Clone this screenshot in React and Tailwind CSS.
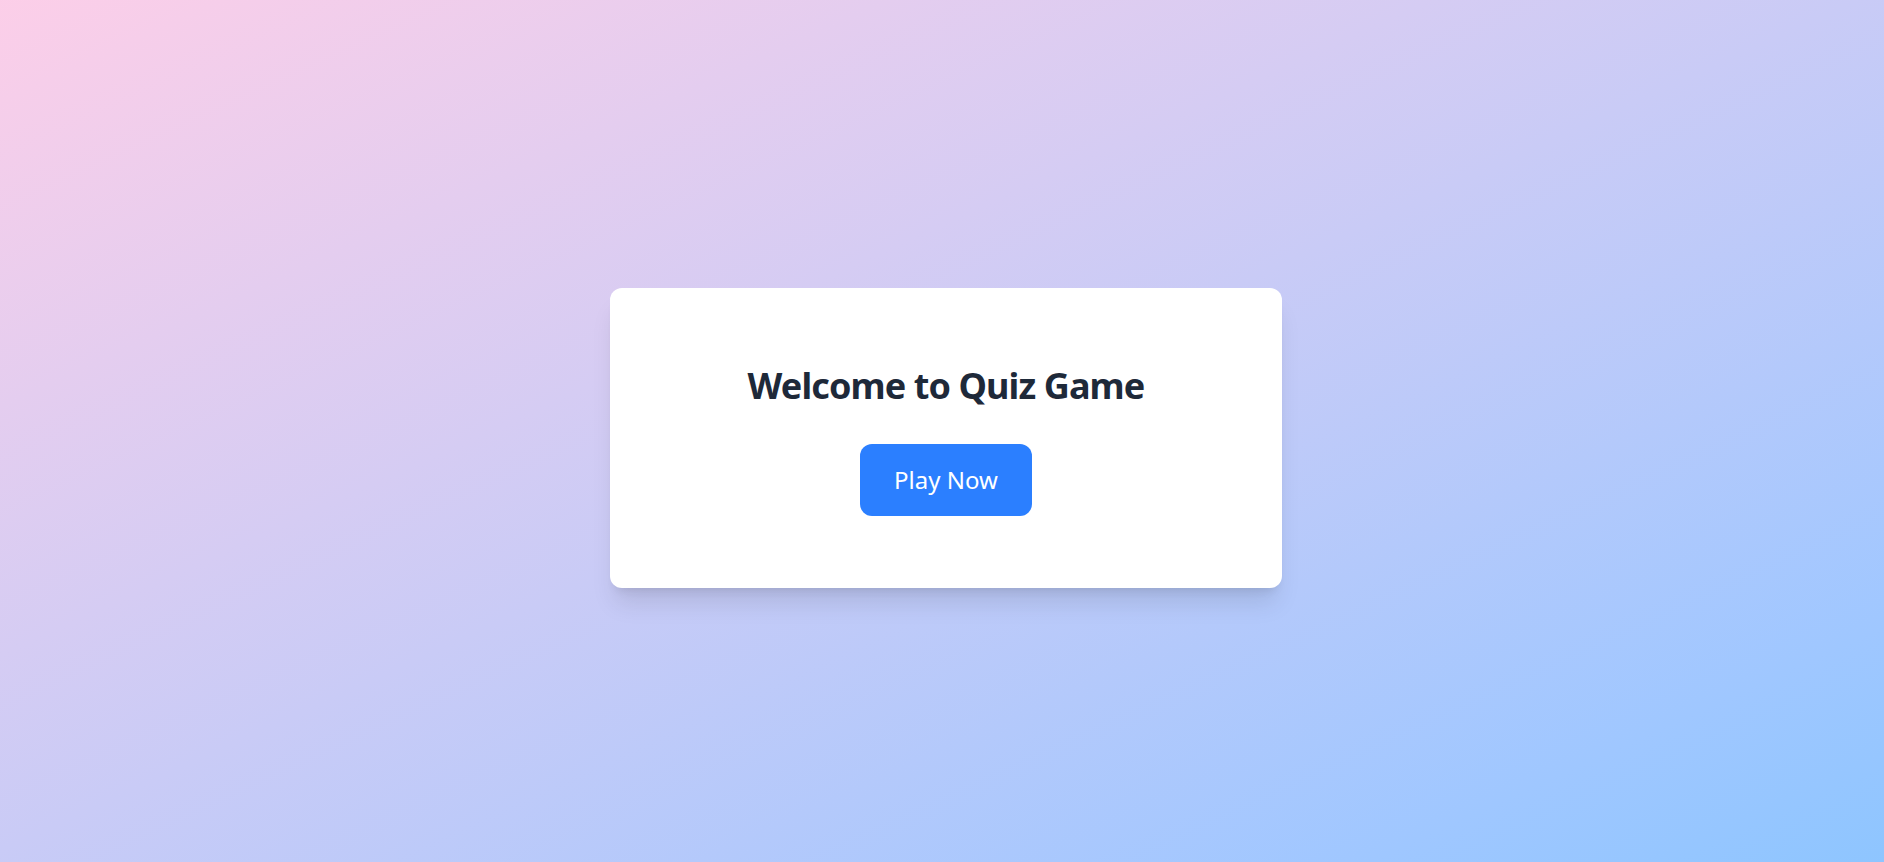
export default function App() {
  return (
    <div
      className="h-screen w-full flex items-center justify-center bg-gradient-to-br from-pink-200 to-blue-300 pl-2 pt-[14px]"
      style={{ fontFamily: '"Noto Sans", "Open Sans", sans-serif' }}
    >
      <div className="w-[672px] h-[300px] bg-white rounded-xl shadow-xl flex flex-col items-center pt-[78px]">
        <h1 className="text-4xl font-bold text-[#1e2939] leading-10 tracking-[-0.9px]">
          Welcome to Quiz Game
        </h1>
        <button className="mt-[38px] w-[172px] h-[72px] bg-[#2b7fff] text-white text-2xl rounded-xl flex items-center justify-center">
          Play Now
        </button>
      </div>
    </div>
  );
}
